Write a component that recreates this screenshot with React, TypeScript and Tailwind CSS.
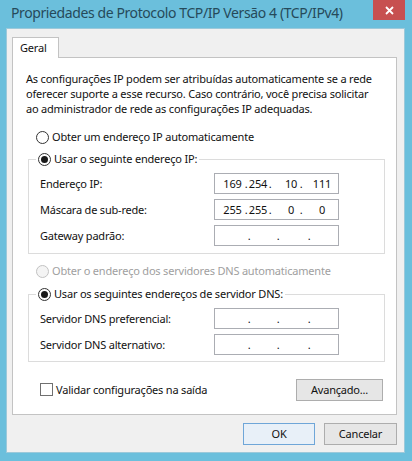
const font = "font-['Noto_Sans','Open_Sans',sans-serif]";

function Radio({ checked = false, disabled = false }: { checked?: boolean; disabled?: boolean }) {
  return (
    <span
      className={
        disabled
          ? "flex h-[13px] w-[13px] shrink-0 items-center justify-center rounded-full border border-[#c2c2c2] bg-[#f4f4f4]"
          : "flex h-[13px] w-[13px] shrink-0 items-center justify-center rounded-full border border-[#333333] bg-white"
      }
    >
      {checked && <span className="h-[7px] w-[7px] rounded-full bg-[#1a1a1a]" />}
    </span>
  );
}

function Dot({ w }: { w: string }) {
  return <span className={`${w} shrink-0 text-center`}>.</span>;
}

function IpBox({ parts }: { parts?: string[] }) {
  // filled and empty ip controls place their dots a little differently
  return (
    <div className="flex h-[21px] w-[125px] items-center border border-[#abadb3] bg-white pl-px text-[11px] text-[#111]">
      {parts ? (
        <>
          <span className="w-[5px] shrink-0" />
          <span className="w-[23px] shrink-0 text-center">{parts[0]}</span>
          <Dot w="w-[4px]" />
          <span className="w-[20px] shrink-0 text-center">{parts[1]}</span>
          <Dot w="w-[4px]" />
          <span className="w-[11px] shrink-0" />
          <span className="w-[16px] shrink-0 text-center">{parts[2]}</span>
          <Dot w="w-[4px]" />
          <span className="w-[3px] shrink-0" />
          <span className="w-[32px] shrink-0 text-center">{parts[3]}</span>
        </>
      ) : (
        <>
          <span className="w-[31px] shrink-0" />
          <Dot w="w-[4px]" />
          <span className="w-[25px] shrink-0" />
          <Dot w="w-[4px]" />
          <span className="w-[27px] shrink-0" />
          <Dot w="w-[4px]" />
        </>
      )}
    </div>
  );
}

function Row({ label, parts }: { label: string; parts?: string[] }) {
  return (
    <div className="flex h-[21px] items-center">
      <span className="w-[174px] whitespace-nowrap">{label}</span>
      <IpBox parts={parts} />
    </div>
  );
}

function Button({ children, primary = false, width }: { children: string; primary?: boolean; width: string }) {
  return (
    <div
      className={
        primary
          ? `flex h-[22px] ${width} items-center justify-center border border-[#6fa6d8] bg-[#e8f0f8]`
          : `flex h-[22px] ${width} items-center justify-center border border-[#adadad] bg-[#e6e6e6]`
      }
    >
      {children}
    </div>
  );
}

export default function App() {
  return (
    <div
      className={`h-[461px] w-[412px] overflow-hidden bg-[#6bbfdc] ${font} text-[11px] leading-[16px] tracking-[-0.2px] text-[#111]`}
    >
      {/* Title bar */}
      <div className="flex h-[28px] items-start">
        <span className="whitespace-nowrap pl-[11px] pt-[3px] text-[14px] leading-[20px] tracking-[-0.4px] text-[#264a5a]">
          Propriedades de Protocolo TCP/IP Versão 4 (TCP/IPv4)
        </span>
        <div className="ml-auto mr-[7px] flex h-[20px] w-[32px] shrink-0 items-center justify-center bg-[#c75050]">
          <svg width="9" height="9" viewBox="0 0 9 9">
            <path d="M1 1L8 8M8 1L1 8" stroke="white" strokeWidth="1.8" />
          </svg>
        </div>
      </div>

      {/* Client area */}
      <div className="ml-[6px] flex h-[425px] w-[399px] flex-col border border-[#9cc9da] bg-[#f0f0f0]">
        {/* Tab */}
        <div className="relative z-10 -mb-px ml-[5px] mt-[8px] flex h-[21px] w-[47px] items-center border border-b-0 border-[#c3c3c3] bg-white pl-[7px]">
          Geral
        </div>

        {/* Tab panel */}
        <div className="ml-[5px] flex h-[358px] w-[385px] flex-col border border-[#c3c3c3] bg-white">
          <p className="ml-[13px] mt-[13px] whitespace-nowrap leading-[15px]">
            As configurações IP podem ser atribuídas automaticamente se a rede
            <br />
            oferecer suporte a esse recurso. Caso contrário, você precisa solicitar
            <br />
            ao administrador de rede as configurações IP adequadas.
          </p>

          <div className="ml-[23px] mt-[13px] flex h-[16px] items-center gap-[3px]">
            <Radio />
            <span>Obter um endereço IP automaticamente</span>
          </div>

          <fieldset className="ml-[15px] mt-[6px] w-[357px] border border-[#dcdcdc] pb-[7px] pl-[11px]">
            <legend className="ml-[-4px] flex h-[16px] items-center gap-[3px] px-[2px]">
              <Radio checked />
              <span>Usar o seguinte endereço IP:</span>
            </legend>
            <div className="flex flex-col gap-[5px] pt-[6px]">
              <Row label="Endereço IP:" parts={["169", "254", "10", "111"]} />
              <Row label="Máscara de sub-rede:" parts={["255", "255", "0", "0"]} />
              <Row label="Gateway padrão:" />
            </div>
          </fieldset>

          <div className="ml-[23px] mt-[9px] flex h-[16px] items-center gap-[3px] text-[#a0a0a0]">
            <Radio disabled />
            <span>Obter o endereço dos servidores DNS automaticamente</span>
          </div>

          <fieldset className="ml-[15px] mt-[7px] w-[357px] border border-[#dcdcdc] pb-[6px] pl-[11px]">
            <legend className="ml-[-4px] flex h-[16px] items-center gap-[3px] px-[2px]">
              <Radio checked />
              <span>Usar os seguintes endereços de servidor DNS:</span>
            </legend>
            <div className="flex flex-col gap-[5px] pt-[6px]">
              <Row label="Servidor DNS preferencial:" />
              <Row label="Servidor DNS alternativo:" />
            </div>
          </fieldset>

          <div className="mt-[17px] flex h-[21px] items-center">
            <span className="ml-[27px] h-[13px] w-[13px] shrink-0 border border-[#707070] bg-white" />
            <span className="ml-[3px]">Validar configurações na saída</span>
            <div className="ml-auto mr-[13px]">
              <Button width="w-[87px]">Avançado...</Button>
            </div>
          </div>
        </div>

        {/* Dialog buttons */}
        <div className="mr-[7px] mt-[8px] flex justify-end gap-[9px]">
          <Button primary width="w-[72px]">
            OK
          </Button>
          <Button width="w-[73px]">Cancelar</Button>
        </div>
      </div>
    </div>
  );
}
